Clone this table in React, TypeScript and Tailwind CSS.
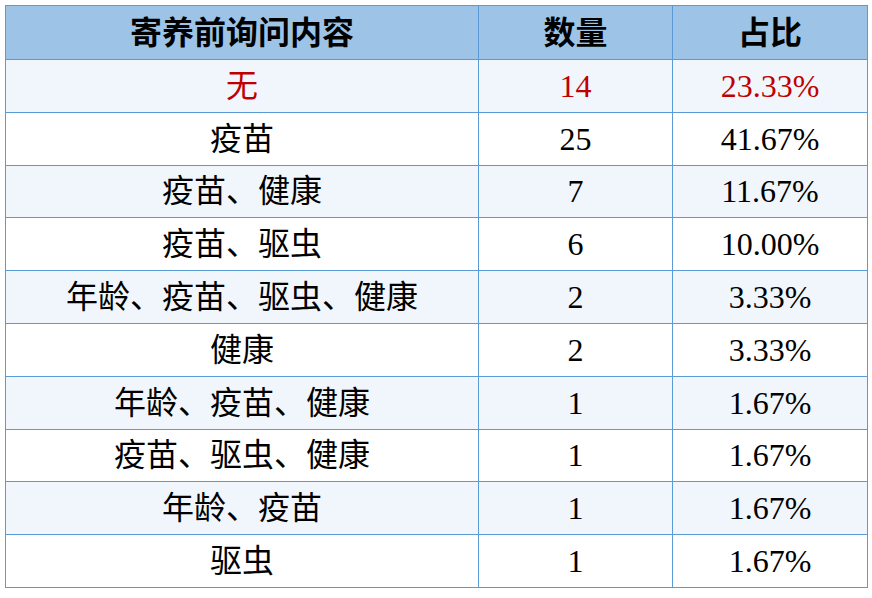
import React from "react";

const rows: [string, string, string][] = [
  ["无", "14", "23.33%"],
  ["疫苗", "25", "41.67%"],
  ["疫苗、健康", "7", "11.67%"],
  ["疫苗、驱虫", "6", "10.00%"],
  ["年龄、疫苗、驱虫、健康", "2", "3.33%"],
  ["健康", "2", "3.33%"],
  ["年龄、疫苗、健康", "1", "1.67%"],
  ["疫苗、驱虫、健康", "1", "1.67%"],
  ["年龄、疫苗", "1", "1.67%"],
  ["驱虫", "1", "1.67%"],
];

export default function App() {
  return (
    <div className="w-[872px] h-[598px] bg-white pl-[5px] pt-[5px] [font-family:'Liberation_Serif','Noto_Sans_CJK_SC',serif]">
      <table className="border-collapse w-[862px] table-fixed text-[32px] leading-none">
        <colgroup>
          <col className="w-[473px]" />
          <col className="w-[194px]" />
          <col className="w-[195px]" />
        </colgroup>
        <thead>
          <tr className="h-[54px] bg-[#9dc3e6]">
            <th className="border border-[#5b9bd5] font-bold text-black text-center">寄养前询问内容</th>
            <th className="border border-[#5b9bd5] font-bold text-black text-center">数量</th>
            <th className="border border-[#5b9bd5] font-bold text-black text-center">占比</th>
          </tr>
        </thead>
        <tbody>
          {rows.map((r, i) => (
            <tr
              key={i}
              className={`h-[52.8px] ${i % 2 === 0 ? "bg-[#f1f6fc]" : "bg-white"} ${i === 0 ? "text-[#c00000]" : "text-black"}`}
            >
              <td className="border border-[#5b9bd5] text-center font-normal">{r[0]}</td>
              <td className="border border-[#5b9bd5] text-center">{r[1]}</td>
              <td className="border border-[#5b9bd5] text-center">{r[2]}</td>
            </tr>
          ))}
        </tbody>
      </table>
    </div>
  );
}
